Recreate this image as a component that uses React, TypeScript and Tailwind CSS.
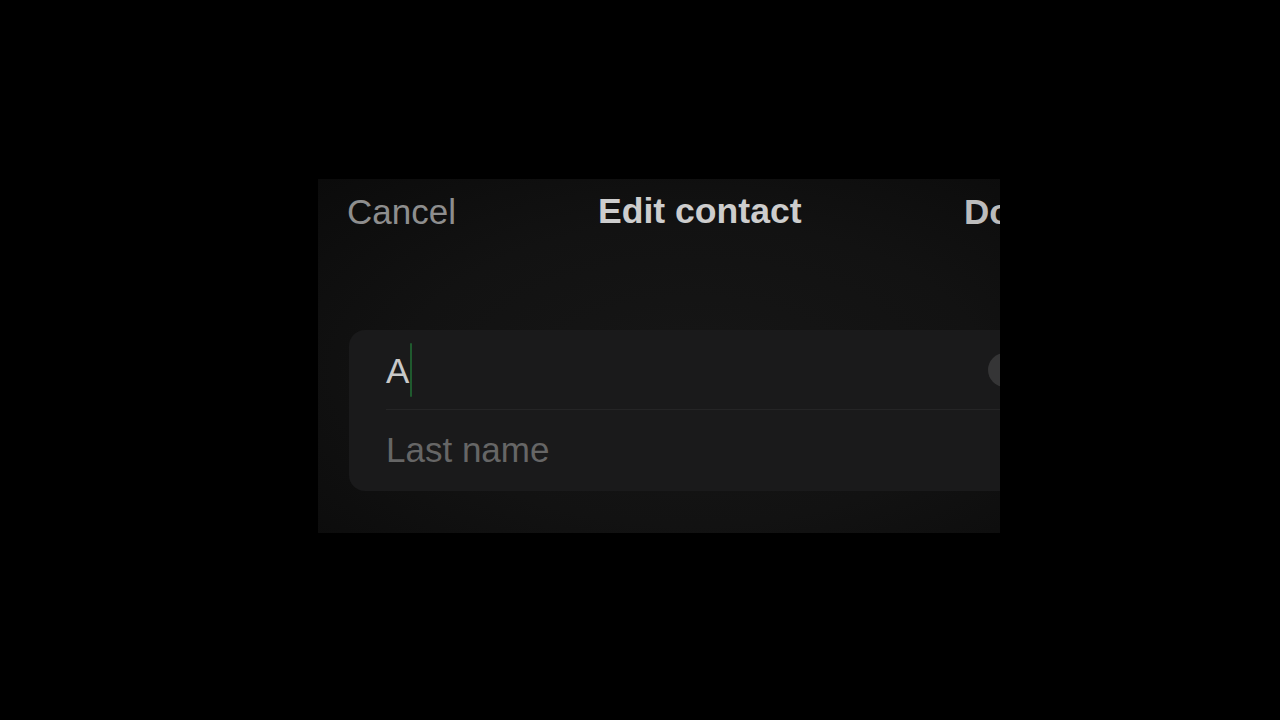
import React from "react";

export default function App() {
  return (
    <div className="w-[1280px] h-[720px] bg-black pl-[318px] pt-[179px]" style={{ fontFamily: '"Liberation Sans", Arial, sans-serif' }}>
      <div className="relative w-[682px] h-[354px] overflow-hidden bg-[radial-gradient(ellipse_at_55%_55%,#161616_0%,#121212_55%,#0b0b0b_100%)]">
        <div className="w-[740px]">
          {/* header */}
          <div className="flex items-center h-[66px] pl-[29px]">
            <span className="text-[35px] text-[#8e8e8e] w-[251px]">Cancel</span>
            <span className="text-[35.6px] font-bold text-[#cdcdcd] w-[366px]">Edit contact</span>
            <span className="text-[35px] font-bold text-[#bcbcbc]">Done</span>
          </div>
          {/* card */}
          <div className="mt-[85px] ml-[31px] w-[700px] rounded-[16px] bg-[#1a1a1b]">
            <div className="flex items-center h-[80px] pl-[37px] relative">
              <span className="text-[35px] text-[#c8c8c8] leading-none">A</span>
              <span className="ml-[1px] w-[2px] h-[54px] bg-[#1f5a2e] rounded-full" />
              <div className="ml-[576px] w-[34px] h-[34px] rounded-full bg-[#353536]" />
              <div className="absolute left-[37px] right-0 bottom-0 h-px bg-[#252526]" />
            </div>
            <div className="flex items-center h-[81px] pl-[37px]">
              <span className="text-[35px] text-[#666666]">Last name</span>
            </div>
          </div>
        </div>
      </div>
    </div>
  );
}
